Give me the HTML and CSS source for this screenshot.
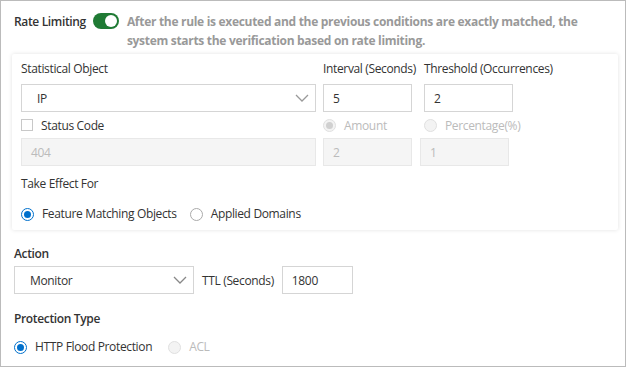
FILE: index.html
```html
<!DOCTYPE html>
<html lang="en">
<head>
    <meta charset="UTF-8">
    <title>Rate Limiting</title>
    <link rel="stylesheet" href="styles.css">
</head>
<body>

    <div class="panel">

        <!-- Header -->
        <div class="header">
            <span class="header-title">Rate Limiting</span>
            <span class="toggle"><span class="knob"></span></span>
            <p class="header-desc">After the rule is executed and the previous conditions are exactly matched, the system starts the verification based on rate limiting.</p>
        </div>

        <!-- Card -->
        <div class="card">
            <div class="row labels">
                <span class="col-main">Statistical Object</span>
                <span class="col-small">Interval (Seconds)</span>
                <span class="col-small">Threshold (Occurrences)</span>
            </div>
            <div class="row fields">
                <div class="select col-main">
                    <span>IP</span>
                    <svg class="chevron" width="14" height="8" viewBox="0 0 14 8"><path d="M1 1l6 6 6-6" fill="none" stroke="#999" stroke-width="1.3"/></svg>
                </div>
                <div class="input col-small">5</div>
                <div class="input col-small">2</div>
            </div>

            <div class="row checks">
                <label class="check col-main"><span class="checkbox"></span>Status Code</label>
                <label class="radio disabled col-small"><span class="dot checked-off"></span>Amount</label>
                <label class="radio disabled col-small"><span class="dot"></span>Percentage(%)</label>
            </div>
            <div class="row fields second">
                <div class="input disabled col-main">404</div>
                <div class="input disabled col-small">2</div>
                <div class="input disabled col-small">1</div>
            </div>

            <div class="sub-label">Take Effect For</div>
            <div class="radio-row">
                <label class="radio"><span class="dot checked"></span>Feature Matching Objects</label>
                <label class="radio"><span class="dot"></span>Applied Domains</label>
            </div>
        </div>

        <!-- Action -->
        <h4 class="section-title">Action</h4>
        <div class="action-row">
            <div class="select action-select">
                <span>Monitor</span>
                <svg class="chevron" width="14" height="8" viewBox="0 0 14 8"><path d="M1 1l6 6 6-6" fill="none" stroke="#888" stroke-width="1.3"/></svg>
            </div>
            <span class="ttl-label">TTL (Seconds)</span>
            <div class="input ttl-input">1800</div>
        </div>

        <!-- Protection type -->
        <h4 class="section-title protection">Protection Type</h4>
        <div class="radio-row protection-row">
            <label class="radio"><span class="dot checked"></span>HTTP Flood Protection</label>
            <label class="radio disabled"><span class="dot"></span>ACL</label>
        </div>

    </div>

</body>
</html>
```

FILE: styles.css
```css
:root {
    --text-color: #333;
    --muted: #999;
    --border-color: #d5d5d5;
    --disabled-bg: #f5f5f5;
    --disabled-text: #bbb;
    --blue: #0070cc;
    --green: #1f7a34;
}

* {
    box-sizing: border-box;
    margin: 0;
    padding: 0;
}

body {
    font-family: 'Open Sans', 'Noto Sans', sans-serif;
    font-size: 12px;
    color: var(--text-color);
    background: white;
}

.panel {
    width: 626px;
    height: 367px;
    border: 1px solid #bbb;
    padding: 0 7px 0 11px;
    overflow: hidden;
    letter-spacing: -0.35px;
    white-space: nowrap;
}

/* header */
.header {
    display: flex;
    align-items: flex-start;
    padding-top: 11px;
    padding-left: 2px;
}

.header-title {
    font-weight: 600;
    line-height: 19px;
    margin-right: 7px;
}

.toggle {
    flex: none;
    width: 26px;
    height: 16px;
    margin-top: 1px;
    margin-right: 8px;
    border-radius: 8px;
    background: var(--green);
    position: relative;
}

.toggle .knob {
    position: absolute;
    right: 2px;
    top: 2px;
    width: 12px;
    height: 12px;
    border-radius: 50%;
    background: white;
}

.header-desc {
    color: var(--muted);
    font-weight: 700;
    line-height: 19px;
    width: 470px;
    white-space: normal;
    letter-spacing: -0.3px;
}

/* card */
.card {
    margin-top: 4px;
    padding: 7px 9px 8px 9px;
    background: white;
    box-shadow: 0 0 4px rgba(0, 0, 0, 0.12);
    border-radius: 2px;
}

.row {
    display: flex;
    gap: 7px;
}

.col-main {
    flex: none;
    width: 295px;
}

.col-small {
    flex: none;
    width: 89px;
}

.row .col-small + .col-small {
    margin-left: 5px;
}

.labels {
    line-height: 16px;
    height: 23px;
}

.fields .input,
.fields .select {
    height: 28px;
}

.input {
    display: flex;
    align-items: center;
    padding: 0 9px;
    border: 1px solid var(--border-color);
    background: white;
}

.input.disabled {
    background: var(--disabled-bg);
    border-color: #e8e8e8;
    color: var(--disabled-text);
}

.fields.second .col-small + .col-small {
    margin-left: 1px;
}

.select {
    display: flex;
    align-items: center;
    justify-content: space-between;
    padding: 0 6px 0 15px;
    border: 1px solid var(--border-color);
    background: white;
}

.checks {
    height: 26px;
    align-items: center;
}

.check,
.radio {
    display: flex;
    align-items: center;
    gap: 8px;
}

.checkbox {
    flex: none;
    width: 12px;
    height: 12px;
    border: 1px solid #c8c8c8;
    background: white;
}

.dot {
    flex: none;
    width: 13px;
    height: 13px;
    border-radius: 50%;
    border: 1px solid #aaa;
    background: white;
    position: relative;
}

.dot.checked {
    border-color: var(--blue);
}

.dot.checked::after,
.dot.checked-off::after {
    content: "";
    position: absolute;
    left: 2px;
    top: 2px;
    width: 7px;
    height: 7px;
    border-radius: 50%;
    background: var(--blue);
}

.radio.disabled {
    color: var(--disabled-text);
}

.radio.disabled .dot {
    border-color: #e0e0e0;
    background: #f3f3f3;
}

.dot.checked-off::after {
    background: #d0d0d0;
}

.sub-label {
    margin-top: 10px;
    line-height: 16px;
}

.radio-row {
    display: flex;
    gap: 13px;
    margin-top: 14px;
    line-height: 16px;
}

/* action */
.section-title {
    font-size: 12px;
    font-weight: 600;
    line-height: 16px;
    margin-top: 16px;
    padding-left: 2px;
}

.action-row {
    display: flex;
    align-items: center;
    margin-top: 4px;
    padding-left: 2px;
}

.action-select {
    width: 180px;
    height: 28px;
}

.ttl-label {
    margin: 0 8px;
}

.ttl-input {
    width: 71px;
    height: 28px;
}

.protection {
    margin-top: 17px;
}

.protection-row {
    margin-top: 12px;
    padding-left: 2px;
    gap: 16px;
}
```
